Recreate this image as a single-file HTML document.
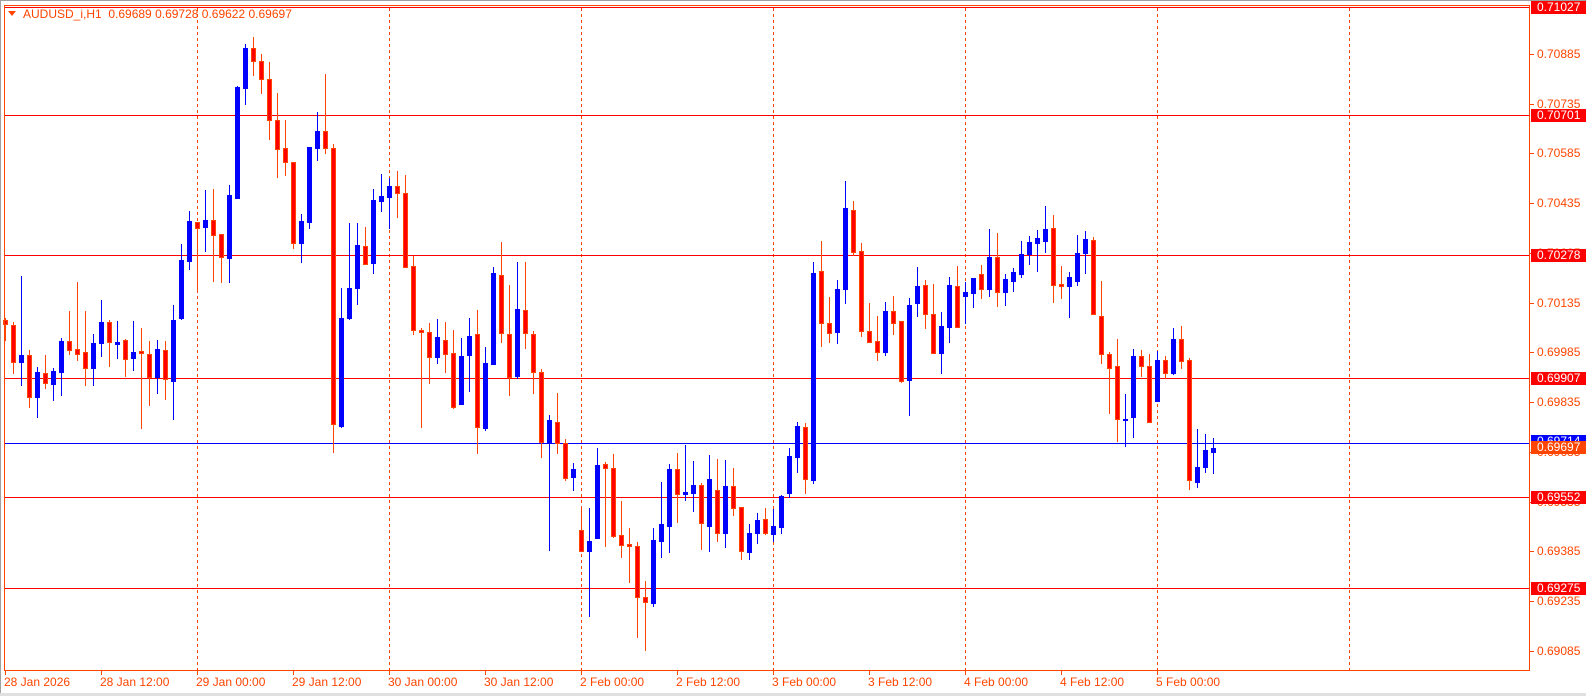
<!DOCTYPE html>
<html><head><meta charset="utf-8">
<style>
html,body{margin:0;padding:0;background:#fff;width:1586px;height:696px;overflow:hidden}
svg{display:block}
text{font-family:"Liberation Sans",sans-serif;font-size:12px}
</style></head>
<body>
<svg id="s" width="1586" height="696" xmlns="http://www.w3.org/2000/svg">
<rect x="0" y="0" width="1586" height="696" fill="#fff"/>
<rect x="0" y="0" width="1586" height="1" fill="#a0a0a0"/>
<rect x="0" y="0" width="1" height="696" fill="#a0a0a0"/>
<rect x="0" y="693" width="1586" height="3" fill="#e0e0e0"/>
<g id="grid"></g>
<g id="lines">
<rect x="5" y="7" width="1524" height="1" fill="#ff0000"/>
<rect x="5" y="115" width="1524" height="1" fill="#ff0000"/>
<rect x="5" y="255" width="1524" height="1" fill="#ff0000"/>
<rect x="5" y="378" width="1524" height="1" fill="#ff0000"/>
<rect x="5" y="497" width="1524" height="1" fill="#ff0000"/>
<rect x="5" y="588" width="1524" height="1" fill="#ff0000"/>
<rect x="5" y="443" width="1524" height="1" fill="#0000ff"/>
</g>
<g id="c"></g>
<rect x="4.5" y="5.5" width="1525" height="665" fill="none" stroke="#ff4500" stroke-width="1"/>
<polygon points="8,11 16,11 12,16" fill="#ff4500"/>
<text x="23" y="18" fill="#ff4500" style="white-space:pre" xml:space="preserve">AUDUSD_i,H1  0.69689 0.69728 0.69622 0.69697</text>
<g id="ax" fill="#ff4500"></g>
</svg>
<script>
var d=[
"r,318,320,324,340","r,322,325,362,373","b,276,355,362,385","r,350,355,397,407","b,367,372,397,417","r,355,373,383,388","b,368,371,384,400","b,338,341,372,395","r,311,341,350,354","r,282,349,354,360","r,311,352,368,385","b,334,343,368,385","b,300,322,343,356","r,320,322,342,366","b,321,342,344,358","r,339,340,359,376","b,321,352,358,370","r,328,351,353,428","r,341,354,377,405","b,340,349,377,393","r,341,350,379,399","b,305,320,381,419","b,244,260,318,319","b,211,221,261,269","r,222,222,228,290","b,190,220,227,251","r,189,220,235,281","r,234,234,257,282","b,185,195,258,282","b,86,87,198,198","b,44,48,88,104","r,37,48,61,75","r,54,61,79,93","r,62,79,120,139","r,93,120,149,177","r,120,148,162,175","r,162,162,243,248","b,214,221,243,262","b,147,147,222,228","b,112,131,148,160","r,74,131,148,153","r,144,148,424,452","b,288,318,426,427","b,223,288,318,319","b,223,245,288,304","r,227,246,264,264","b,189,200,263,273","b,174,196,201,211","b,178,186,197,228","r,171,186,193,217","r,175,193,267,267","r,256,266,330,334","r,328,330,332,427","r,323,332,357,383","b,319,337,357,363","r,322,340,354,372","r,330,353,407,408","b,338,356,404,404","b,318,336,355,391","r,310,334,427,453","b,347,363,428,430","b,267,273,364,364","r,242,275,333,342","r,285,334,377,395","b,262,309,376,378","r,262,310,333,348","r,331,334,372,393","r,369,372,442,457","b,415,420,442,550","r,393,422,443,453","r,439,443,478,480","b,463,469,477,490","r,507,530,551,551","b,508,541,551,616","b,448,465,538,538","r,462,464,468,546","r,454,468,536,537","r,501,535,545,557","r,528,544,546,582","r,542,546,597,637","r,581,597,602,650","b,528,540,603,606","b,482,524,541,557","b,464,469,526,552","r,453,469,494,522","b,445,492,494,500","b,461,485,493,511","r,483,485,523,549","b,455,479,526,551","r,459,490,533,541","b,460,486,533,547","r,468,486,508,515","r,507,507,551,559","b,524,533,552,559","b,513,520,533,543","r,508,519,533,534","b,509,526,534,541","b,495,496,527,533","b,448,456,493,497","b,422,426,457,472","r,423,427,479,493","b,262,273,480,483","r,241,271,323,346","r,297,323,333,342","b,280,289,332,343","b,181,208,289,303","r,201,210,252,255","r,243,251,331,336","r,303,331,342,342","r,316,341,352,360","b,302,311,352,355","r,296,311,323,334","r,321,321,381,382","b,298,305,380,415","b,267,286,303,316","r,280,285,314,328","r,284,314,353,353","b,312,326,353,373","b,277,285,327,342","r,266,286,327,327","b,282,292,296,323","b,278,278,293,307","r,265,274,289,298","b,229,257,289,296","r,233,257,292,306","b,274,279,292,305","b,268,272,281,291","b,241,254,274,277","b,236,242,254,264","b,230,238,243,271","b,206,229,241,252","r,215,228,285,302","r,266,284,286,298","b,272,277,286,317","b,235,253,281,285","b,231,239,253,273","r,237,240,314,314","r,281,316,354,363","r,352,354,368,413","r,339,366,419,441","b,394,419,420,446","b,349,356,417,437","r,350,356,366,376","r,354,366,422,422","b,351,360,401,401","r,356,360,373,378","b,328,339,373,374","r,326,339,361,368","r,358,360,480,489","b,429,467,482,487","b,434,450,467,472","b,438,448,452,473"];
var h='';
for(var i=0;i<d.length;i++){
 var p=d[i].split(','),c=p[0],hi=+p[1],t=+p[2],b=+p[3],lo=+p[4];
 var x=5+8*i; var bh=Math.max(1,b-t+1);
 var wc=c=='b'?'#0000ff':'#ff4500';
 h+='<rect x="'+x+'" y="'+hi+'" width="1" height="'+(lo-hi+1)+'" fill="'+wc+'"/>';
 h+='<rect x="'+(x-2)+'" y="'+t+'" width="5" height="'+bh+'" fill="'+wc+'"/>';
 if(c=='r'&&bh>2) h+='<rect x="'+(x-1)+'" y="'+(t+1)+'" width="3" height="'+(bh-2)+'" fill="#ff0000"/>';
}
document.getElementById('c').innerHTML=h;
var g='';
[197,389,581,773,965,1157,1349].forEach(function(x){g+='<line x1="'+(x+0.5)+'" y1="8" x2="'+(x+0.5)+'" y2="670" stroke="#ff4500" stroke-width="1" stroke-dasharray="3,3"/>';});
document.getElementById('grid').innerHTML=g;
var a='';
var labs=["28 Jan 2026","28 Jan 12:00","29 Jan 00:00","29 Jan 12:00","30 Jan 00:00","30 Jan 12:00","2 Feb 00:00","2 Feb 12:00","3 Feb 00:00","3 Feb 12:00","4 Feb 00:00","4 Feb 12:00","5 Feb 00:00"];
for(var k=0;k<labs.length;k++){var x=5+96*k;a+='<rect x="'+x+'" y="671" width="1" height="4"/><text x="'+(x-1)+'" y="679" dy="0.3em" dominant-baseline="middle">'+labs[k]+'</text>';}
var pr=[["0.70885",54],["0.70735",104],["0.70585",153],["0.70435",203],["0.70285",253],["0.70135",303],["0.69985",352],["0.69835",402],["0.69685",452],["0.69535",502],["0.69385",551],["0.69235",601],["0.69085",651]];
pr.forEach(function(q){a+='<rect x="1530" y="'+q[1]+'" width="4" height="1"/><text x="1537" y="'+(q[1]+4)+'">'+q[0]+'</text>';});
var bx=[["0.71027",7,"#ff0000"],["0.70701",115,"#ff0000"],["0.70278",255,"#ff0000"],["0.69907",378,"#ff0000"],["0.69552",497,"#ff0000"],["0.69275",588,"#ff0000"],["0.69714",441,"#0000ff"],["0.69697",447,"#ff4500"]];
bx.forEach(function(q){a+='<rect x="1531" y="'+(q[1]-6)+'" width="55" height="13" fill="'+q[2]+'"/><text x="1537" y="'+(q[1]+4)+'" fill="#fff">'+q[0]+'</text>';});
document.getElementById('ax').innerHTML=a;
</script>
</body></html>
